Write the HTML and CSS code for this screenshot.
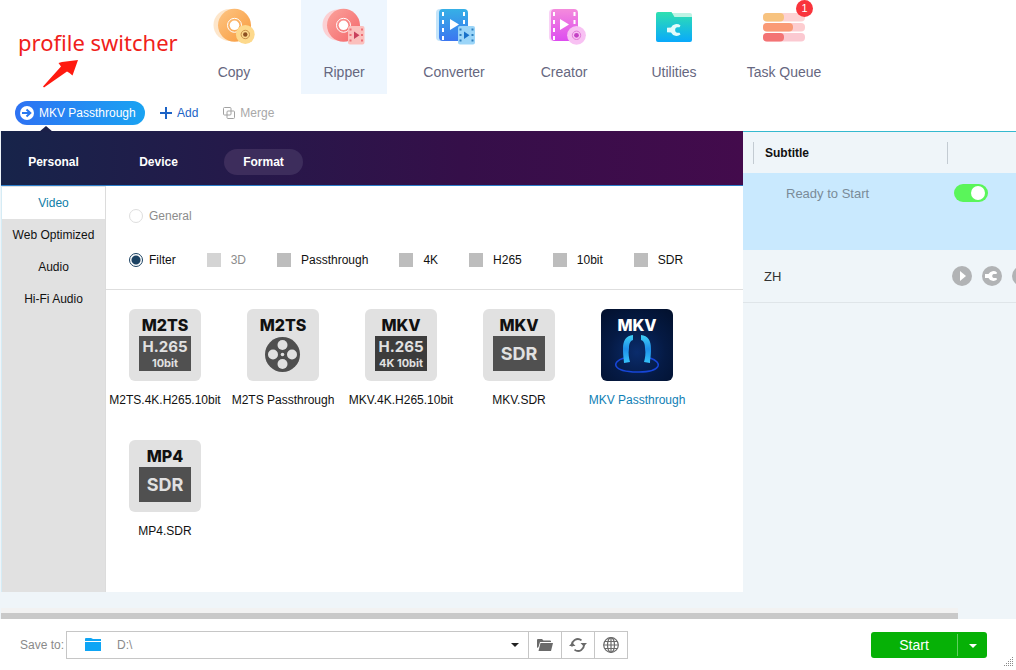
FILE: index.html
```html
<!DOCTYPE html>
<html lang="en">
  <head>
    <meta charset="UTF-8" />
    <meta name="viewport" content="width=device-width, initial-scale=1.0" />
    <title>Ripper</title>
    <link rel="stylesheet" href="styles.css">
  </head>
  <body>
    <header class="header">
      <div class="note">
        <p>profile switcher</p>
        <svg class="note-arrow" width="36" height="28" viewBox="0 0 36 28">
          <path d="M0 26.500L18 6.500L15.500 3L19 2L35 0L29.500 15.500L26.500 13L24 11.500L1 27.500z" fill="#ff1a10" />
        </svg>
      </div>
      <nav class="nav">
        <button class="nav-item" type="button">
          <svg width="44" height="37" viewBox="0 0 44 37">
            <defs>
              <linearGradient id="gold" x1="0" y1="0" x2="1" y2="1">
                <stop offset="0" stop-color="#fdc584" />
                <stop offset="1" stop-color="#f89a3c" />
              </linearGradient>
            </defs>
            <circle cx="17.500" cy="17" r="16" fill="#fde6cb" />
            <circle cx="22.500" cy="17.300" r="16.500" fill="url(#gold)" />
            <circle cx="22.500" cy="17.300" r="7" fill="none" stroke="#fff" stroke-width="1" />
            <circle cx="22.500" cy="17.300" r="4.800" fill="#fff" />
            <circle cx="33.300" cy="26.500" r="9.400" fill="#fdd98c" />
            <circle cx="33.300" cy="26.500" r="4.200" fill="none" stroke="#c98f4a" stroke-width="1" />
            <circle cx="33.300" cy="26.500" r="2.200" fill="#8c4f22" />
          </svg>
          <span>Copy</span>
        </button>
        <button class="nav-item active" type="button">
          <svg width="44" height="37" viewBox="0 0 44 37">
            <defs>
              <linearGradient id="coral" x1="0" y1="0" x2="1" y2="1">
                <stop offset="0" stop-color="#fba39c" />
                <stop offset="1" stop-color="#f4666a" />
              </linearGradient>
            </defs>
            <circle cx="16" cy="17" r="15.500" fill="#fbd0d3" />
            <circle cx="21.500" cy="17.300" r="16.500" fill="url(#coral)" />
            <circle cx="21.500" cy="17.300" r="7" fill="none" stroke="#fff" stroke-width="1" />
            <circle cx="21.500" cy="17.300" r="4.800" fill="#fff" />
            <rect x="26" y="18" width="16.500" height="18.500" rx="2" fill="#fbc0bd" />
            <path d="M28.500 20.500v14M40 20.500v14" stroke="#ee6f76" stroke-width="2" stroke-dasharray="2 3.500" />
            <path d="M32 23.500l5.500 3.700-5.500 3.700z" fill="#c9405c" />
          </svg>
          <span>Ripper</span>
        </button>
        <button class="nav-item" type="button">
          <svg width="44" height="37" viewBox="0 0 44 37">
            <defs>
              <linearGradient id="blue" x1="0" y1="0" x2="0" y2="1">
                <stop offset="0" stop-color="#36b0e6" />
                <stop offset="1" stop-color="#3c76f0" />
              </linearGradient>
            </defs>
            <rect x="4" y="1" width="26" height="32" rx="4" fill="#c3e4fa" />
            <rect x="7" y="1" width="29" height="32" rx="4" fill="url(#blue)" />
            <path d="M11 4v28M32 4v14" stroke="#fff" stroke-width="2" stroke-dasharray="4 4" />
            <path d="M18 11l9 5.500-9 5.500z" fill="#fff" />
            <rect x="26" y="18" width="17" height="18.500" rx="2" fill="#9bd5f8" />
            <path d="M28.500 20.500v14M40.500 20.500v14" stroke="#2c7fbd" stroke-width="2" stroke-dasharray="2 3.500" />
            <path d="M32 23.500l5.500 3.700-5.500 3.700z" fill="#1871c9" />
          </svg>
          <span>Converter</span>
        </button>
        <button class="nav-item" type="button">
          <svg width="44" height="37" viewBox="0 0 44 37">
            <defs>
              <linearGradient id="pink" x1="0" y1="0" x2="0" y2="1">
                <stop offset="0" stop-color="#f48bdc" />
                <stop offset="1" stop-color="#dd4cf0" />
              </linearGradient>
            </defs>
            <rect x="7" y="1" width="24" height="32" rx="4" fill="#f9d2f6" />
            <rect x="9" y="1" width="27" height="32" rx="4" fill="url(#pink)" />
            <path d="M12 4v28M32.500 4v14" stroke="#fff" stroke-width="2" stroke-dasharray="4 4" />
            <path d="M18 11l9 5.500-9 5.500z" fill="#fff" />
            <circle cx="34.500" cy="27.300" r="9.400" fill="#f8c1f3" />
            <circle cx="34.500" cy="27.300" r="4.200" fill="none" stroke="#e07bd8" stroke-width="1" />
            <circle cx="34.500" cy="27.300" r="2.400" fill="#c341c4" />
          </svg>
          <span>Creator</span>
        </button>
        <button class="nav-item" type="button">
          <svg width="44" height="37" viewBox="0 0 44 37">
            <defs>
              <linearGradient id="teal" x1="0" y1="0" x2="0" y2="1">
                <stop offset="0" stop-color="#2fe0b0" />
                <stop offset="1" stop-color="#09a9fb" />
              </linearGradient>
            </defs>
            <path d="M18 5h20a2 2 0 0 1 2 2v6H18z" fill="#bdf3e4" />
            <path d="M4 6a2 2 0 0 1 2-2h13.500l3 5H40v23a2 2 0 0 1-2 2H6a2 2 0 0 1-2-2z" fill="url(#teal)" />
            <path d="M28.500 17.500a6.300 6.300 0 0 0-9.500 2l-4 .300v4.400l4 .300a6.300 6.300 0 0 0 9.500 2l-1-1.800h-2.700l-1.600-1.500v-2.400l1.600-1.500h2.700z" fill="#e2fbfa" />
          </svg>
          <span>Utilities</span>
        </button>
        <button class="nav-item" type="button">
          <svg width="44" height="37" viewBox="0 0 44 37">
            <rect x="1" y="5" width="42" height="8.500" rx="4" fill="#fdd3d4" />
            <rect x="1" y="15" width="42" height="8.500" rx="4" fill="#fdcdd0" />
            <rect x="1" y="25" width="42" height="8.500" rx="4" fill="#fbc9d1" />
            <rect x="1" y="5" width="21" height="8.500" rx="4" fill="#f7c37f" />
            <rect x="1" y="15" width="30" height="8.500" rx="4" fill="#fa9a76" />
            <rect x="1" y="25" width="21" height="8.500" rx="4" fill="#f37374" />
          </svg>
          <span>Task Queue</span>
          <span class="badge">1</span>
        </button>
      </nav>
    </header>

    <div class="toolbar">
      <button class="profile" type="button">
        <svg width="14" height="14" viewBox="0 0 14 14">
          <circle cx="7" cy="7" r="7" fill="#fff" />
          <path d="M2 7h8M6.500 3.500L10.300 7l-3.800 3.500" fill="none" stroke="#2878f0" stroke-width="2" />
        </svg>
        MKV Passthrough
      </button>
      <button class="tool" type="button">
        <svg width="12" height="12" viewBox="0 0 12 12">
          <path d="M6 0v12M0 6h12" stroke="#1c63c6" stroke-width="2" />
        </svg>
        Add
      </button>
      <button class="tool merge" type="button" disabled>
        <svg width="12" height="12" viewBox="0 0 12 12" fill="none" stroke="#a2a2a2">
          <rect x=".5" y=".5" width="7.500" height="7.500" rx="1" />
          <rect x="4" y="4" width="7.500" height="7.500" rx="1" />
        </svg>
        Merge
      </button>
    </div>

    <main class="main">
      <section class="panel">
        <div class="tabs">
          <button type="button">Personal</button>
          <button type="button">Device</button>
          <button class="active" type="button">Format</button>
        </div>
        <div class="panel-body">
          <div class="side">
            <button class="active" type="button">Video</button>
            <button type="button">Web Optimized</button>
            <button type="button">Audio</button>
            <button type="button">Hi-Fi Audio</button>
          </div>
          <div class="formats">
            <form class="filter">
              <div class="filter-row">
                <label class="radio muted"><input type="radio" name="mode" disabled />General</label>
              </div>
              <div class="filter-row">
                <label class="radio"><input type="radio" name="mode" checked />Filter</label>
                <label class="check muted"><input type="checkbox" disabled />3D</label>
                <label class="check"><input type="checkbox" />Passthrough</label>
                <label class="check"><input type="checkbox" />4K</label>
                <label class="check"><input type="checkbox" />H265</label>
                <label class="check"><input type="checkbox" />10bit</label>
                <label class="check"><input type="checkbox" />SDR</label>
              </div>
            </form>
            <div class="tiles">
              <button class="tile" type="button">
                <span class="cover">
                  <b>M2TS</b>
                  <span class="codec"><span>H.265</span><small>10bit</small></span>
                </span>
                M2TS.4K.H265.10bit
              </button>
              <button class="tile" type="button">
                <span class="cover">
                  <b>M2TS</b>
                  <svg width="36" height="36" viewBox="0 0 36 36">
                    <circle cx="17.500" cy="18.500" r="17.500" fill="#4f4f4f" />
                    <g fill="#e1e1e1">
                      <circle cx="17.500" cy="9" r="5" />
                      <circle cx="17.500" cy="28" r="5" />
                      <circle cx="8" cy="18.500" r="5" />
                      <circle cx="27" cy="18.500" r="5" />
                      <circle cx="17.500" cy="18.500" r="1.800" />
                    </g>
                  </svg>
                </span>
                M2TS Passthrough
              </button>
              <button class="tile" type="button">
                <span class="cover">
                  <b>MKV</b>
                  <span class="codec dark"><span>H.265</span><small>4K 10bit</small></span>
                </span>
                MKV.4K.H265.10bit
              </button>
              <button class="tile" type="button">
                <span class="cover">
                  <b>MKV</b>
                  <span class="codec sdr">SDR</span>
                </span>
                MKV.SDR
              </button>
              <button class="tile selected" type="button">
                <span class="cover">
                  <b>MKV</b>
                  <svg width="46" height="40" viewBox="0 0 46 40">
                    <defs>
                      <linearGradient id="glow" x1="0" y1="0" x2="0" y2="1">
                        <stop offset="0" stop-color="#3fd0f5" />
                        <stop offset=".5" stop-color="#1f8fe8" />
                        <stop offset="1" stop-color="#35c3fa" />
                      </linearGradient>
                    </defs>
                    <path d="M10 23C-3 27-2 36.500 23 37S49 27 36 23" fill="none" stroke="#1746d8" stroke-width="1.600" />
                    <path d="M19 0c-7 1-10 5-10 14 0 7 1 11 1 14l6-1c-1-4-2-8-1-14 0-4 1-7 4-8z" fill="url(#glow)" />
                    <path d="M27 0c7 1 10 5 10 14 0 7-1 11-1 14l-6-1c1-4 2-8 1-14 0-4-1-7-4-8z" fill="url(#glow)" />
                  </svg>
                </span>
                MKV Passthrough
              </button>
              <button class="tile" type="button">
                <span class="cover">
                  <b>MP4</b>
                  <span class="codec sdr">SDR</span>
                </span>
                MP4.SDR
              </button>
            </div>
          </div>
        </div>
      </section>

      <section class="queue">
        <table>
          <colgroup>
            <col class="col-sub" />
            <col />
          </colgroup>
          <thead>
            <tr>
              <th><span>Subtitle</span></th>
              <th aria-label="Actions"><span></span></th>
            </tr>
          </thead>
          <tbody>
            <tr class="current">
              <td>Ready to Start</td>
              <td><input class="switch" type="checkbox" aria-label="Enable" checked /></td>
            </tr>
            <tr class="track">
              <td>ZH</td>
              <td>
                <div class="actions">
                  <button type="button" aria-label="Play">
                    <svg width="20" height="20" viewBox="0 0 20 20">
                      <circle cx="10" cy="10" r="10" fill="#b1b3b5" />
                      <path d="M8 5l6 5-6 5z" fill="#fff" />
                    </svg>
                  </button>
                  <button type="button" aria-label="Edit">
                    <svg width="20" height="20" viewBox="0 0 20 20">
                      <circle cx="10" cy="10" r="10" fill="#b1b3b5" />
                      <path d="M15 6.500A5.400 5.400 0 0 0 6.500 8H3v4h3.500a5.400 5.400 0 0 0 8.500 1.500L14.500 12h-3l-1.200-1V9l1.200-1h3z" fill="#fff" />
                    </svg>
                  </button>
                  <button type="button" aria-label="More">
                    <svg width="20" height="20" viewBox="0 0 20 20">
                      <circle cx="10" cy="10" r="10" fill="#b1b3b5" />
                    </svg>
                  </button>
                </div>
              </td>
            </tr>
          </tbody>
        </table>
      </section>
    </main>

    <div class="scroll"><div class="thumb"></div></div>

    <footer class="footer">
      <label for="path">Save to:</label>
      <div class="save">
        <div class="path">
          <svg width="16" height="14" viewBox="0 0 16 14" fill="#0ea5f5">
            <path d="M0 1a1 1 0 0 1 1-1h5l2 1h8v2H0z" />
            <path d="M0 4h16v9H0z" />
          </svg>
          <select id="path">
            <option>D:\</option>
          </select>
        </div>
        <button type="button" aria-label="Open folder">
          <svg width="16" height="14" viewBox="0 0 16 14" fill="#6a6a6a">
            <path d="M0 2a1 1 0 0 1 1-1h4l1.500 1.500H13a1 1 0 0 1 1 1V4H3L1.500 9 0 10z" />
            <path d="M3.500 5H16l-2 8H1.500z" />
          </svg>
        </button>
        <button type="button" aria-label="Refresh">
          <svg width="18" height="16" viewBox="0 0 18 16">
            <path d="M3.300 9.500A5.800 5.800 0 0 1 12.500 3.400M14.700 6.500A5.800 5.800 0 0 1 5.500 12.600" fill="none" stroke="#6a6a6a" stroke-width="1.800" />
            <path d="M0 9.500h6.500L3.300 6zM11.500 6.500H18L14.700 10z" fill="#6a6a6a" transform="translate(0 -.5)" />
          </svg>
        </button>
        <button type="button" aria-label="Open site">
          <svg width="16" height="16" viewBox="0 0 16 16" fill="none" stroke="#6a6a6a" stroke-width="1.200">
            <circle cx="8" cy="8" r="7.300" />
            <ellipse cx="8" cy="8" rx="3.500" ry="7.300" />
            <path d="M8 .7v14.600M.7 8h14.600M1.700 4.500h12.600M1.700 11.500h12.600" />
          </svg>
        </button>
      </div>
      <div class="start">
        <button type="button">Start</button>
        <button class="more" type="button" aria-label="Start options"></button>
      </div>
      <svg class="grip" width="10" height="10" viewBox="0 0 10 10">
        <path d="M9.500 1v9M7.500 3v7M5.500 5v5M3.500 7v3M1.500 9v1" stroke="#8a8a8a" stroke-dasharray="1 1" />
      </svg>
    </footer>
  </body>
</html>
```
FILE: styles.css
```css
* {
  box-sizing: border-box;
}
body {
  margin: 0;
  min-height: 100vh;
  display: flex;
  flex-direction: column;
  overflow-x: hidden;
  background: #fff;
  font: 12px/16px "Liberation Sans", Arial, sans-serif;
  color: #111;
}
button {
  padding: 0;
  border: 0;
  background: none;
  font: inherit;
  color: inherit;
  cursor: pointer;
}
svg {
  display: block;
  flex: none;
}
p {
  margin: 0;
}

/* header */
.header {
  display: flex;
}
.note {
  width: 191px;
  flex: none;
  padding: 27px 0 0 18px;
  font: 22px/30px "Noto Sans", sans-serif;
  color: #f0211a;
  white-space: nowrap;
}
.note-arrow {
  margin: 3px 0 0 25px;
}
.nav {
  display: flex;
  gap: 24px;
}
.nav-item {
  position: relative;
  width: 86px;
  height: 94px;
  padding-top: 8px;
  display: flex;
  flex-direction: column;
  align-items: center;
  gap: 18px;
  font-size: 14px;
  line-height: 18px;
  color: #666780;
  white-space: nowrap;
}
.nav-item.active {
  background: #eef6fe;
}
.badge {
  position: absolute;
  top: 0;
  right: 14px;
  width: 17px;
  height: 17px;
  border-radius: 50%;
  background: #f9343c;
  color: #fff;
  font-size: 11px;
  line-height: 17px;
  text-align: center;
}

/* toolbar */
.toolbar {
  display: flex;
  align-items: center;
  height: 37px;
  padding-left: 15px;
}
.profile {
  position: relative;
  display: flex;
  align-items: center;
  gap: 5px;
  width: 130px;
  height: 24px;
  padding-left: 5px;
  border-radius: 12px;
  background: linear-gradient(90deg, #2e72f3, #1aa3f2);
  color: #fff;
  white-space: nowrap;
}
.profile::after {
  content: "";
  position: absolute;
  left: 24px;
  top: 25px;
  border: 7px solid transparent;
  border-top: 0;
  border-bottom: 6px solid #1b2049;
}
.tool {
  display: flex;
  align-items: center;
  gap: 5px;
  margin-left: 15px;
  color: #1c63c6;
}
.tool.merge {
  margin-left: 25px;
  color: #a8a8a8;
}

/* main */
.main {
  flex: 1;
  display: flex;
  padding: 0 0 16px 1px;
  background: #eff5f9;
}
.panel {
  flex: 0 1 742px;
  display: flex;
  flex-direction: column;
}
.tabs {
  display: flex;
  align-items: center;
  gap: 26px;
  height: 55px;
  padding: 8px 0 0 13px;
  border-bottom: 1px solid #2b7dc9;
  background: linear-gradient(90deg, #17244a, #25194a 32%, #350f49 62%, #430b4c);
  font-weight: bold;
  color: #fff;
}
.tabs button {
  width: 79px;
  height: 26px;
  border-radius: 13px;
}
.tabs .active {
  background: #3d2d5c;
}
.panel-body {
  flex: 1;
  display: flex;
  background: #fff;
}
.side {
  width: 105px;
  flex: none;
  padding-top: 1px;
  border-left: 1px solid #d5ecf5;
  border-right: 1px solid #dcdcdc;
  background: #e1e1e1;
}
.side button {
  display: block;
  width: 100%;
  height: 32px;
}
.side .active {
  background: #fff;
  color: #0f7ea8;
}
.formats {
  flex: 1;
  min-width: 0;
}
.filter {
  display: flex;
  flex-direction: column;
  gap: 28px;
  padding: 22px 23px 21px;
  border-bottom: 1px solid #dedede;
}
.filter-row {
  display: flex;
  gap: 31px;
}
.filter label {
  display: flex;
  align-items: center;
  white-space: nowrap;
}
.filter input {
  appearance: none;
  width: 14px;
  height: 14px;
  margin: 0;
}
.radio {
  gap: 6px;
}
.check {
  gap: 10px;
}
.muted {
  color: #8c8c8c;
}
.radio input {
  border: 1px solid #1b4263;
  border-radius: 50%;
}
.radio input:checked {
  background: radial-gradient(circle, #1b4263 4px, #fff 5px);
}
.radio input:disabled {
  border-color: #dedede;
}
.check input {
  background: #bdbdbd;
}
.check input:disabled {
  background: #d4d4d4;
}
.tiles {
  display: grid;
  grid-template-columns: repeat(auto-fill, 118px);
  row-gap: 32px;
  padding-top: 19px;
}
.tile {
  display: flex;
  flex-direction: column;
  align-items: center;
  gap: 11px;
  white-space: nowrap;
}
.cover {
  display: flex;
  flex-direction: column;
  align-items: center;
  width: 72px;
  height: 72px;
  padding-top: 7px;
  border-radius: 6px;
  background: #e1e1e1;
  font-family: Inter, sans-serif;
}
.cover b {
  font-size: 16px;
  font-weight: 800;
  line-height: 18px;
  margin-bottom: 2px;
}
.codec {
  display: flex;
  flex-direction: column;
  align-items: center;
  justify-content: center;
  width: 52px;
  height: 35px;
  background: #505050;
  color: #e1e1e1;
  font-size: 15px;
  font-weight: 700;
  line-height: 18px;
}
.codec small {
  font-size: 11px;
  line-height: 14px;
}
.codec.dark {
  background: #3c3c3c;
}
.codec.sdr {
  font-size: 18px;
}
.selected {
  color: #0f80b5;
}
.selected .cover {
  background: radial-gradient(circle at 50% 60%, #0a2c6c, #051a44 50%, #02102c);
  color: #fff;
}
.selected b {
  margin-bottom: 1px;
}

/* queue */
.queue {
  flex: 1;
  min-width: 0;
  border-top: 1px solid #35b9cf;
}
.queue table {
  width: 100%;
  table-layout: fixed;
  border-spacing: 0;
}
.col-sub {
  width: 204px;
}
.queue th {
  height: 41px;
  padding: 0;
  text-align: left;
}
.queue th span {
  display: block;
  height: 22px;
  padding-left: 11px;
  border-left: 1px solid #c3cbd2;
  line-height: 22px;
}
.queue th:first-child span {
  margin-left: 10px;
}
.queue td {
  padding: 0;
  overflow: hidden;
}
.current {
  height: 77px;
  background: #c9e9fe;
  font-size: 13px;
  color: #7a8b98;
}
.queue .current td {
  padding-top: 11px;
  vertical-align: top;
}
.queue .current td:first-child {
  padding: 13px 0 0 43px;
}
.switch {
  appearance: none;
  display: block;
  width: 34px;
  height: 18px;
  margin: 0 0 0 7px;
  border-radius: 9px;
  background: #b1b3b5;
}
.switch::before {
  content: "";
  display: block;
  width: 14px;
  height: 14px;
  margin: 2px;
  border-radius: 50%;
  background: #fff;
}
.switch:checked {
  background: #5af55a;
}
.switch:checked::before {
  margin-left: 17px;
}
.track {
  height: 53px;
  font-size: 13px;
  color: #333;
}
.track td {
  border-bottom: 1px solid #dfe5e9;
}
.queue .track td:first-child {
  padding: 2px 0 0 21px;
}
.actions {
  display: flex;
  gap: 10px;
  padding-left: 5px;
}

/* scrollbar */
.scroll {
  height: 11px;
  padding-left: 1px;
  background: #eff5f9;
}
.thumb {
  width: 94.3%;
  height: 11px;
  border-top: 5px solid #f2f2f2;
  background: #c9c9c9;
}

/* footer */
.footer {
  position: relative;
  display: flex;
  align-items: center;
  height: 51px;
  padding: 0 29px 0 20px;
  color: #8a8a8a;
}
.footer label {
  width: 46px;
  flex: none;
  white-space: nowrap;
}
.save {
  flex: 0 1 562px;
  display: flex;
  height: 28px;
  border: 1px solid #c6c6c6;
}
.path {
  flex: 1;
  display: flex;
  align-items: center;
  padding: 0 9px 0 18px;
}
.path::after {
  content: "";
  border: 4px solid transparent;
  border-top-color: #222;
  border-bottom: 0;
}
.path select {
  appearance: none;
  flex: 1;
  margin-left: 12px;
  padding: 0 4px;
  border: 0;
  background: none;
  font: inherit;
  color: inherit;
}
.save button {
  display: flex;
  align-items: center;
  justify-content: center;
  width: 33px;
  border-left: 1px solid #c6c6c6;
}
.start {
  display: flex;
  align-items: center;
  width: 116px;
  height: 26px;
  margin-left: auto;
  border-radius: 3px;
  background: #06b106;
  color: #fff;
}
.start button {
  flex: 1;
  font-size: 14px;
}
.start .more {
  flex: 0 0 30px;
  height: 22px;
  border-left: 1px solid #5fd05f;
}
.more::before {
  content: "";
  display: inline-block;
  vertical-align: middle;
  border: 4px solid transparent;
  border-top-color: #fff;
  border-bottom: 0;
}
.grip {
  position: absolute;
  right: 3px;
  bottom: 4px;
}
```
